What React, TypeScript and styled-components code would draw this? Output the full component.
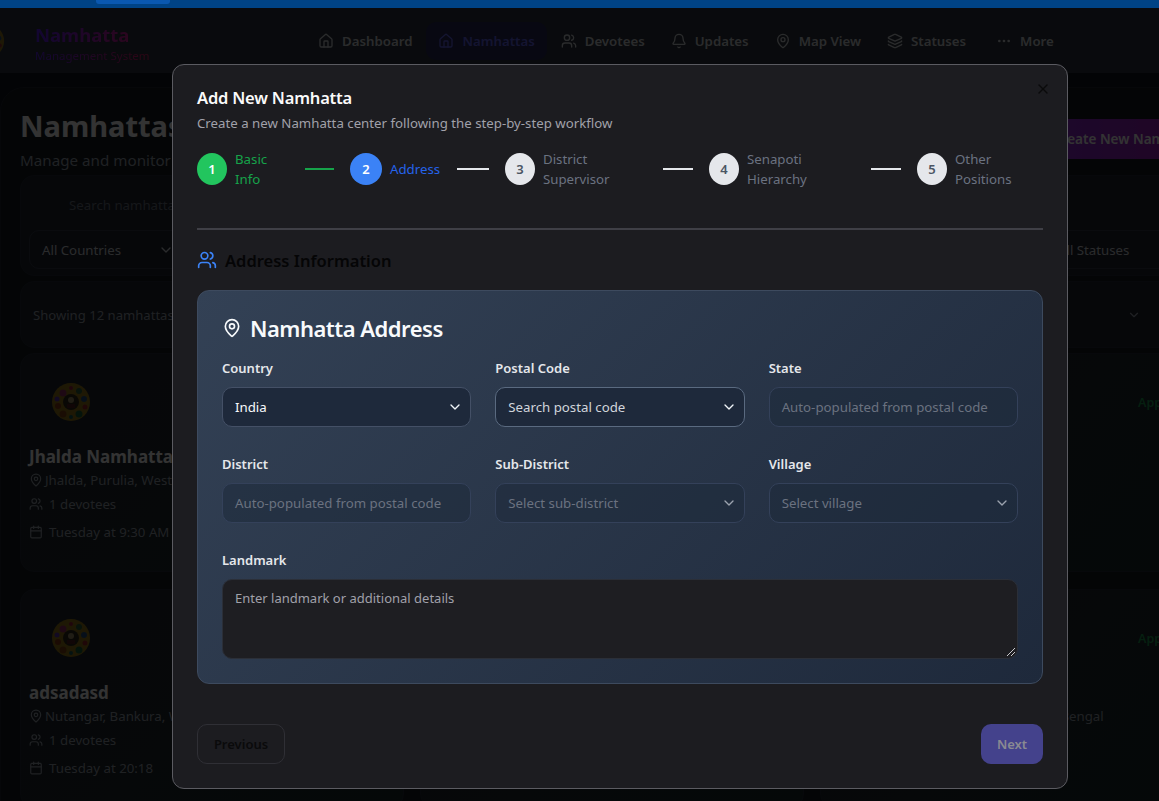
import React from "react";
import styled, { createGlobalStyle } from "styled-components";
import {
  Bell,
  Calendar,
  ChevronDown,
  Ellipsis,
  House,
  Layers,
  MapPin,
  Users,
  X,
} from "lucide-react";

const FONT = `"Noto Sans", "Open Sans", sans-serif`;

const GlobalStyle = createGlobalStyle`
  html, body {
    margin: 0;
    padding: 0;
    height: 100%;
    overflow: hidden;
    background: #111827;
  }
  * {
    box-sizing: border-box;
  }
  body {
    font-family: ${FONT};
  }
`;

const Page = styled.div`
  width: 1224px;
  height: 801px;
  overflow: hidden;
  color: #fff;
  background: #0f1420;
  display: flex;
  flex-direction: column;
`;

/* browser strip sits above the backdrop */
const TopStrip = styled.div`
  position: fixed;
  top: 0;
  left: 0;
  right: 0;
  height: 8px;
  background: #004385;
  z-index: 30;
`;

const TopTab = styled.div`
  position: absolute;
  top: 0;
  left: 96px;
  width: 74px;
  height: 4px;
  border-radius: 0 0 3px 3px;
  background: #0a58b0;
`;

const Header = styled.header`
  flex: none;
  margin-top: 8px;
  height: 65px;
  background: #2f3640;
  display: flex;
  align-items: center;
`;

const LogoWrap = styled.div`
  width: 36px;
  margin-left: -31px;
  margin-right: 30px;
  display: flex;
  opacity: 0.6;
`;

const Brand = styled.div`
  width: 271px;
  display: flex;
  flex-direction: column;
  margin-top: 5px;
`;

const BrandName = styled.span`
  font-size: 18.5px;
  line-height: 25px;
  font-weight: 700;
  width: fit-content;
  background: linear-gradient(90deg, #5b21f5, #d61f9a);
  -webkit-background-clip: text;
  background-clip: text;
  color: transparent;
`;

const BrandSub = styled.span`
  font-size: 11.5px;
  line-height: 17px;
  width: fit-content;
  background: linear-gradient(90deg, #5b21f5, #e11d62);
  -webkit-background-clip: text;
  background-clip: text;
  color: transparent;
`;

const Nav = styled.nav`
  display: flex;
  align-items: center;
  gap: 2px;
`;

const NavItem = styled.div<{ $active?: boolean }>`
  height: 38px;
  padding: 0 12px;
  display: flex;
  align-items: center;
  gap: 8px;
  border-radius: 10px;
  font-size: 13.25px;
  font-weight: 600;
  color: ${(p) => (p.$active ? "#6366f1" : "#d1d5db")};
  background: ${(p) => (p.$active ? "#28285c" : "transparent")};

  &:last-child {
    margin-left: 4px;
  }
`;

const Main = styled.main`
  flex: 1;
  margin-top: 14px;
  padding: 20px 19px 0;
  border: 1px solid #20252e;
  border-radius: 24px 0 0 0;
  display: flex;
  flex-direction: column;
  background: #141a22;
`;

const TitleRow = styled.div`
  display: flex;
  justify-content: space-between;
  align-items: flex-start;
`;

const PageTitle = styled.h1`
  margin: 0;
  font-size: 29px;
  line-height: 36px;
  font-weight: 700;
`;

const PageSub = styled.p`
  margin: 4px 0 0;
  font-size: 15.2px;
  line-height: 24px;
  color: #9ca3af;
`;

const CreateButton = styled.div`
  width: 164px;
  height: 40px;
  margin-top: 11px;
  border-radius: 8px;
  padding-left: 13px;
  display: flex;
  align-items: center;
  white-space: nowrap;
  font-size: 13.5px;
  font-weight: 600;
  background: linear-gradient(90deg, #8b2bd9, #a21caf);
`;

const Panel = styled.section`
  background: #1f2530;
  border: 1px solid #262c37;
  border-radius: 14px;
`;

const FilterCard = styled(Panel)`
  flex: none;
  height: 101px;
  margin-top: 3px;
  padding: 10px 8px 0;
  display: flex;
  flex-direction: column;
  gap: 6px;
`;

const SearchBox = styled.div`
  height: 38px;
  padding-left: 40px;
  display: flex;
  align-items: center;
  font-size: 13.25px;
  color: #6b7280;
`;

const FilterRow = styled.div`
  display: flex;
  justify-content: space-between;
`;

const FilterSelect = styled.div<{ $width: number }>`
  width: ${(p) => p.$width}px;
  height: 39px;
  padding: 0 12px;
  border: 1px solid #333b49;
  border-radius: 10px;
  display: flex;
  align-items: center;
  justify-content: space-between;
  font-size: 13.25px;
  color: #d1d5db;
`;

const ShowingRow = styled(Panel)`
  flex: none;
  height: 67px;
  margin-top: 5px;
  padding: 0 12px;
  display: flex;
  align-items: center;
  justify-content: space-between;
  font-size: 13.1px;
  color: #9ca3af;
`;

const ShowingChevron = styled.div`
  margin-right: 50px;
  display: flex;
  color: #9ca3af;
`;

const CardGrid = styled.div`
  flex: none;
  margin-top: 5px;
  display: grid;
  grid-template-columns: repeat(3, 384px);
  gap: 17px 16px;
`;

const Card = styled(Panel)`
  height: 219px;
  padding: 28px 8px 0;
  display: flex;
  flex-direction: column;
  background: linear-gradient(135deg, #20262f, #1c2a2c);
`;

const CardTop = styled.div`
  display: flex;
  justify-content: space-between;
  padding-left: 22px;
  height: 42px;
`;

const CardLogo = styled.div`
  display: flex;
  opacity: 0.65;
`;

const Badge = styled.span`
  width: 57px;
  flex: none;
  font-size: 12.5px;
  font-weight: 600;
  line-height: 42px;
  white-space: nowrap;
  color: #1d9a50;
`;

const CardName = styled.h3`
  margin: 21px 0 0;
  font-size: 17px;
  line-height: 24px;
  font-weight: 700;
`;

const CardMeta = styled.div<{ $gap: number; $indent: number }>`
  margin-top: ${(p) => p.$gap}px;
  display: flex;
  align-items: center;
  gap: ${(p) => p.$indent}px;
  font-size: 13.25px;
  line-height: 20px;
  white-space: nowrap;
  color: #9ca3af;
`;

const Backdrop = styled.div`
  position: fixed;
  inset: 0;
  background: rgba(0, 0, 0, 0.8);
  z-index: 10;
`;

const Modal = styled.div`
  position: fixed;
  left: 172px;
  top: 64px;
  width: 896px;
  height: 725px;
  z-index: 20;
  padding: 23px 24px 24px;
  background: #1c1c20;
  border: 1px solid #5b5b61;
  border-radius: 12px;
  display: flex;
  flex-direction: column;
`;

const CloseButton = styled.div`
  position: absolute;
  top: 16px;
  right: 16px;
  display: flex;
  color: #0a0a0b;
`;

const ModalTitle = styled.h2`
  margin: 0;
  font-size: 16.5px;
  line-height: 20px;
  font-weight: 600;
  letter-spacing: -0.2px;
  color: #fafafa;
`;

const ModalSub = styled.p`
  margin: 5px 0 0;
  font-size: 13.25px;
  line-height: 20px;
  color: #a1a1aa;
`;

const Stepper = styled.div`
  margin-top: 16px;
  display: flex;
  align-items: center;
  height: 40px;
`;

const Step = styled.div<{ $width: number }>`
  width: ${(p) => p.$width}px;
  flex: none;
  display: flex;
  align-items: center;
`;

const StepDot = styled.div<{ $bg: string; $fg: string; $dotWidth: number }>`
  width: ${(p) => p.$dotWidth}px;
  height: 32px;
  flex: none;
  border-radius: 50%;
  display: flex;
  align-items: center;
  justify-content: center;
  font-size: 13px;
  font-weight: 600;
  background: ${(p) => p.$bg};
  color: ${(p) => p.$fg};
`;

const StepLabel = styled.div<{ $color: string; $labelWidth: number }>`
  margin-left: 8px;
  width: ${(p) => p.$labelWidth}px;
  flex: none;
  font-size: 13.25px;
  line-height: 20px;
  color: ${(p) => p.$color};
`;

const StepLine = styled.div<{ $color: string; $lineWidth: number }>`
  flex: none;
  width: ${(p) => p.$lineWidth}px;
  height: 2px;
  margin: 0 16px 0 auto;
  background: ${(p) => p.$color};
`;

const Divider = styled.div`
  flex: none;
  margin-top: 39px;
  height: 2px;
  background: #3f3f46;
`;

const SectionHead = styled.div`
  flex: none;
  margin-top: 20px;
  height: 20px;
  display: flex;
  align-items: center;
  gap: 8px;
  font-size: 16.5px;
  font-weight: 600;
  color: #050506;
`;

const AddressPanel = styled.section`
  flex: none;
  margin-top: 20px;
  height: 394px;
  padding: 24px;
  border: 1px solid #3d4a5e;
  border-radius: 12px;
  background: linear-gradient(135deg, #334155, #1e293b);
`;

const AddressTitle = styled.h3`
  margin: 0;
  display: flex;
  align-items: center;
  gap: 8px;
  height: 26px;
  font-size: 22px;
  font-weight: 600;
  letter-spacing: -0.5px;
  color: #f8fafc;
`;

const FieldGrid = styled.div`
  margin-top: 19px;
  display: grid;
  grid-template-columns: repeat(3, 1fr);
  column-gap: 24px;
  row-gap: 29px;
`;

const Field = styled.div<{ $wide?: boolean }>`
  display: flex;
  flex-direction: column;
  gap: 11px;
  grid-column: ${(p) => (p.$wide ? "1 / -1" : "auto")};
`;

const Label = styled.label`
  font-size: 13px;
  line-height: 16px;
  font-weight: 600;
  color: #e5e7eb;
`;

const Control = styled.div<{ $variant: "active" | "focus" | "off" }>`
  height: 40px;
  padding: 0 7px 0 12px;
  display: flex;
  align-items: center;
  justify-content: space-between;
  border-radius: 10px;
  font-size: 13.25px;
  white-space: nowrap;
  border: 1px solid
    ${(p) => (p.$variant === "focus" ? "#5a6a80" : p.$variant === "active" ? "#445066" : "#34415a")};
  background: ${(p) => (p.$variant === "off" ? "rgba(30, 41, 59, 0.55)" : "#1e293b")};
  color: ${(p) =>
    p.$variant === "focus" ? "#d1d5db" : p.$variant === "active" ? "#f8fafc" : "#6b7280"};
`;

const Chevron = styled(ChevronDown)<{ $dim?: boolean }>`
  flex: none;
  color: ${(p) => (p.$dim ? "#9ca3af" : "#f1f5f9")};
`;

const Landmark = styled.div`
  position: relative;
  height: 80px;
  padding: 8px 12px;
  border: 1px solid #2b2f38;
  border-radius: 10px;
  background: #1e1e22;
  font-size: 13px;
  line-height: 20px;
  color: #a1a1aa;
`;

const ResizeGrip = styled.svg`
  position: absolute;
  right: 1px;
  bottom: 1px;
`;

const Footer = styled.div`
  flex: none;
  margin-top: 40px;
  display: flex;
  justify-content: space-between;
`;

const PrevButton = styled.div`
  width: 88px;
  height: 40px;
  border: 1px solid #2f2f35;
  border-radius: 10px;
  display: flex;
  align-items: center;
  justify-content: center;
  font-size: 13px;
  font-weight: 600;
  color: #0a0a0b;
`;

const NextButton = styled.div`
  width: 62px;
  height: 40px;
  border-radius: 10px;
  display: flex;
  align-items: center;
  justify-content: center;
  font-size: 13px;
  font-weight: 600;
  color: #8a8a92;
  background: #44428c;
`;

const Mandala = ({ size }: { size: number }) => (
  <svg width={size} height={size} viewBox="0 0 40 40">
    <circle cx="20" cy="20" r="19" fill="#d9a90e" />
    <circle cx="12" cy="11" r="3.5" fill="#d63384" />
    <circle cx="20" cy="6" r="2" fill="#e11d48" />
    <circle cx="28" cy="9" r="3" fill="#2f7d46" />
    <circle cx="33" cy="17" r="3" fill="#2563a8" />
    <circle cx="6" cy="17" r="2.5" fill="#7c3aed" />
    <circle cx="7" cy="24" r="3" fill="#c2410c" />
    <circle cx="12" cy="32" r="3.5" fill="#b45309" />
    <circle cx="20" cy="35" r="2" fill="#0f766e" />
    <circle cx="28" cy="32" r="3.5" fill="#15803d" />
    <circle cx="34" cy="25" r="2.5" fill="#dc2626" />
    <circle cx="20" cy="20" r="8" fill="#3b2a14" />
    <circle cx="20" cy="18" r="3" fill="#e8c98a" />
    <rect x="16" y="22" width="8" height="4" fill="#6b1d1d" />
  </svg>
);

const STEPS = [
  { n: 1, label: "Basic Info", width: 153, dot: 30, labelWidth: 54, line: 29, state: "done" },
  { n: 2, label: "Address", width: 155, dot: 32, labelWidth: 54, line: 32, state: "current" },
  { n: 3, label: "District Supervisor", width: 204, dot: 30, labelWidth: 104, line: 30, state: "next" },
  { n: 4, label: "Senapoti Hierarchy", width: 208, dot: 30, labelWidth: 108, line: 30, state: "next" },
  { n: 5, label: "Other Positions", width: 126, dot: 30, labelWidth: 88, line: 0, state: "next" },
];

const stepColors = (state: string) => {
  if (state === "done") return { bg: "#22c55e", fg: "#ffffff", text: "#16a34a", line: "#16a34a" };
  if (state === "current") return { bg: "#3b82f6", fg: "#ffffff", text: "#2563eb", line: "#e5e7eb" };
  return { bg: "#e5e7eb", fg: "#4b5563", text: "#6b7280", line: "#e5e7eb" };
};

const NAV = [
  { label: "Dashboard", Icon: House },
  { label: "Namhattas", Icon: House, active: true },
  { label: "Devotees", Icon: Users },
  { label: "Updates", Icon: Bell },
  { label: "Map View", Icon: MapPin },
  { label: "Statuses", Icon: Layers },
  { label: "More", Icon: Ellipsis },
];

const CARDS = [
  { name: "Jhalda Namhatta", place: "Jhalda, Purulia, West Bengal", time: "Tuesday at 9:30 AM", badge: false },
  { name: "Hooghly Namhatta", place: "Chandannagar, Hooghly", time: "Sunday at 17:00", badge: false },
  { name: "Nadia Namhatta", place: "Mayapur, Nadia", time: "Friday at 18:00", badge: true },
  { name: "adsadasd", place: "Nutangar, Bankura, West Bengal", time: "Tuesday at 20:18", badge: false },
  { name: "Bankura Namhatta", place: "Bishnupur, Bankura", time: "Monday at 19:00", badge: false },
  { name: "Burdwan Namhatta", place: "Kalyanpura, Purba Burdwan, West Bengal", time: "Saturday at 18:30", badge: true },
];

const FIELDS = [
  { label: "Country", text: "India", variant: "active", select: true },
  { label: "Postal Code", text: "Search postal code", variant: "focus", select: true },
  { label: "State", text: "Auto-populated from postal code", variant: "off", select: false },
  { label: "District", text: "Auto-populated from postal code", variant: "off", select: false },
  { label: "Sub-District", text: "Select sub-district", variant: "off", select: true },
  { label: "Village", text: "Select village", variant: "off", select: true },
] as const;

export default function App() {
  return (
    <>
      <GlobalStyle />
      <TopStrip>
        <TopTab />
      </TopStrip>
      <Page>
        <Header>
          <LogoWrap>
            <Mandala size={36} />
          </LogoWrap>
          <Brand>
            <BrandName>Namhatta</BrandName>
            <BrandSub>Management System</BrandSub>
          </Brand>
          <Nav>
            {NAV.map(({ label, Icon, active }) => (
              <NavItem key={label} $active={active}>
                <Icon size={16} strokeWidth={2} />
                {label}
              </NavItem>
            ))}
          </Nav>
        </Header>
        <Main>
          <TitleRow>
            <div>
              <PageTitle>Namhattas</PageTitle>
              <PageSub>Manage and monitor all namhatta centers</PageSub>
            </div>
            <CreateButton>Create New Namhatta</CreateButton>
          </TitleRow>
          <FilterCard>
            <SearchBox>Search namhattas...</SearchBox>
            <FilterRow>
              <FilterSelect $width={158}>
                All Countries
                <ChevronDown size={16} />
              </FilterSelect>
              <FilterSelect $width={150}>All Statuses</FilterSelect>
            </FilterRow>
          </FilterCard>
          <ShowingRow>
            Showing 12 namhattas
            <ShowingChevron>
              <ChevronDown size={14} />
            </ShowingChevron>
          </ShowingRow>
          <CardGrid>
            {CARDS.map((card) => (
              <Card key={card.name}>
                <CardTop>
                  <CardLogo>
                    <Mandala size={40} />
                  </CardLogo>
                  {card.badge && <Badge>Approved</Badge>}
                </CardTop>
                <CardName>{card.name}</CardName>
                <CardMeta $gap={1} $indent={2}>
                  <MapPin size={14} />
                  {card.place}
                </CardMeta>
                <CardMeta $gap={4} $indent={6}>
                  <Users size={14} />1 devotees
                </CardMeta>
                <CardMeta $gap={8} $indent={6}>
                  <Calendar size={14} />
                  {card.time}
                </CardMeta>
              </Card>
            ))}
          </CardGrid>
        </Main>
      </Page>
      <Backdrop />
      <Modal>
        <CloseButton>
          <X size={16} />
        </CloseButton>
        <ModalTitle>Add New Namhatta</ModalTitle>
        <ModalSub>Create a new Namhatta center following the step-by-step workflow</ModalSub>
        <Stepper>
          {STEPS.map((s) => {
            const c = stepColors(s.state);
            return (
              <Step key={s.n} $width={s.width}>
                <StepDot $bg={c.bg} $fg={c.fg} $dotWidth={s.dot}>
                  {s.n}
                </StepDot>
                <StepLabel $color={c.text} $labelWidth={s.labelWidth}>
                  {s.label}
                </StepLabel>
                {s.line > 0 && <StepLine $color={c.line} $lineWidth={s.line} />}
              </Step>
            );
          })}
        </Stepper>
        <Divider />
        <SectionHead>
          <Users size={20} color="#3b82f6" />
          Address Information
        </SectionHead>
        <AddressPanel>
          <AddressTitle>
            <MapPin size={20} />
            Namhatta Address
          </AddressTitle>
          <FieldGrid>
            {FIELDS.map((f) => (
              <Field key={f.label}>
                <Label>{f.label}</Label>
                <Control $variant={f.variant}>
                  {f.text}
                  {f.select && <Chevron size={16} $dim={f.variant === "off"} />}
                </Control>
              </Field>
            ))}
            <Field $wide>
              <Label>Landmark</Label>
              <Landmark>
                Enter landmark or additional details
                <ResizeGrip width="10" height="10" viewBox="0 0 10 10">
                  <path d="M1 9 L9 1 M5 9 L9 5" stroke="#c8c8cc" strokeWidth="1" />
                </ResizeGrip>
              </Landmark>
            </Field>
          </FieldGrid>
        </AddressPanel>
        <Footer>
          <PrevButton>Previous</PrevButton>
          <NextButton>Next</NextButton>
        </Footer>
      </Modal>
    </>
  );
}
